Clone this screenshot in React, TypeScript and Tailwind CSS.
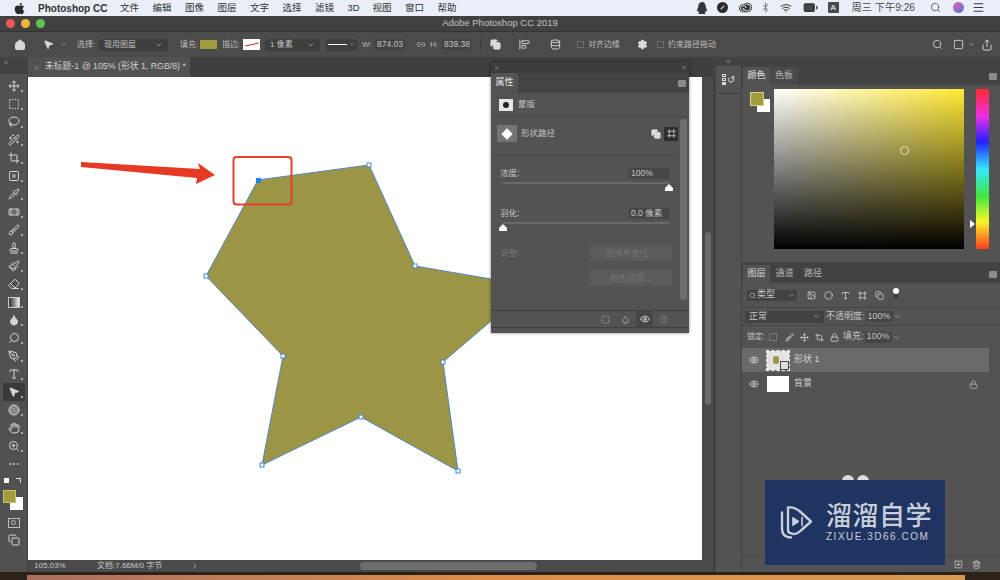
import type { ReactNode } from 'react';
import {
  AlignStartVertical, Bluetooth, Brush, Circle, Crop, Database, Droplet, Ellipsis, Eraser, Eye, Hand, Home, Lasso, Link2, Lock,
  MousePointer2, Move, Paintbrush, PenTool, Pipette, Search, Settings, Share, SquareX, Square, SquareDashed, Stamp,
  Trash2, Type, Wand2, Wifi, ZoomIn, Bandage, ChevronDown, ChevronRight, Menu, X, Image, Frame, SquarePlus, Copy, Battery,
} from 'lucide-react';
import { FaApple, FaQq } from 'react-icons/fa';
import { SiAdobecreativecloud } from 'react-icons/si';

const FONT = '[font-family:"Liberation_Sans","Noto_Sans_CJK_SC",sans-serif]';

const MENUS = ['文件', '编辑', '图像', '图层', '文字', '选择', '滤镜'];
const MENUS_AFTER = ['视图', '窗口', '帮助'];

const TOOLS = [Move, SquareDashed, Lasso, Wand2, Crop, SquareX, Pipette, Bandage, Brush, Stamp, Paintbrush, Eraser];

function PanelMenu() {
  return <div className="h-[7px] w-[8px] rounded-[1px] bg-[#8c8c8c]" />;
}

function Grip({ className }: { className: string }) {
  return <span className={`text-[7px] leading-none text-[#8f8f8f] ${className}`}>«</span>;
}

function SliderThumb({ className }: { className: string }) {
  return (
    <svg viewBox="0 0 8 7" className={`absolute h-[7px] w-[8px] ${className}`}>
      <path d="M4 0 L8 4 L8 7 L0 7 L0 4 Z" fill="#fff" />
    </svg>
  );
}

function Dropdown({ className, label }: { className: string; label: string }) {
  return (
    <div className={`flex h-[12px] items-center justify-between rounded-[2px] bg-[#3e3e3e] px-[5px] text-[8px] text-[#c4c4c4] ${className}`}>
      <span>{label}</span>
      <ChevronDown size={8} className="text-[#b0b0b0]" />
    </div>
  );
}

function Field({ className, label }: { className: string; label: string }) {
  return <div className={`flex h-[11px] items-center rounded-[1px] bg-[#434343] px-[2px] text-[8.5px] text-[#c4c4c4] ${className}`}>{label}</div>;
}

function MenuBar() {
  return (
    <div className="flex h-[16px] items-center bg-[#eaeff7] text-[9.5px] text-[#2e3238]">
      <FaApple size={13} className="ml-[13px] text-[#2a2a2a]" />
      <span className="ml-[12px] w-[82px] text-[10px] font-bold">Photoshop CC</span>
      {MENUS.map((m) => (
        <span key={m} className="w-[32.5px]">{m}</span>
      ))}
      <span className="w-[25px]">3D</span>
      {MENUS_AFTER.map((m) => (
        <span key={m} className="w-[32.5px]">{m}</span>
      ))}
      <div className="ml-auto flex items-center text-[#33373d]">
        <FaQq size={12} className="mr-[9px]" />
        <div className="mr-[11px] flex h-[11px] w-[11px] items-center justify-center rounded-full bg-[#2b2b2b]">
          <div className="h-[5px] w-px rotate-45 bg-white" />
        </div>
        <SiAdobecreativecloud size={13} className="mr-[8px]" />
        <Bluetooth size={11} className="mr-[9px] text-[#777]" />
        <Wifi size={12} className="mr-[11px]" />
        <Battery size={15} fill="#444" className="mr-[10px]" />
        <div className="mr-[13px] flex h-[11px] w-[11px] items-center justify-center rounded-[1px] bg-[#4a4a4a] text-[8px] text-white">A</div>
        <span className="mr-[15px] text-[10.2px] text-[#44484e]">周三 下午9:26</span>
        <Search size={11} className="mr-[12px] text-[#55595f]" />
        <div className="mr-[8px] h-[11px] w-[11px] rounded-full bg-gradient-to-br from-[#e35ea6] to-[#3c70d8]" />
        <Menu size={13} className="mr-[15px]" />
      </div>
    </div>
  );
}

function TitleBar() {
  return (
    <div className="relative flex h-[16px] items-center justify-center border-b border-[#333] bg-[#414141] text-[9.5px] text-[#c2c2c2]">
      <div className="absolute left-[6px] flex gap-[6px]">
        <div className="h-[9px] w-[9px] rounded-full bg-[#ee5a52]" />
        <div className="h-[9px] w-[9px] rounded-full bg-[#f0b43a]" />
        <div className="h-[9px] w-[9px] rounded-full bg-[#5bc550]" />
      </div>
      Adobe Photoshop CC 2019
    </div>
  );
}

function OptionsBar() {
  return (
    <div className="flex h-[25px] items-center bg-[#4b4b4b] text-[8px] text-[#bdbdbd]">
      <Home size={12} fill="#d8d8d8" className="ml-[14px] text-[#d8d8d8]" />
      <MousePointer2 size={11} fill="#d8d8d8" className="ml-[17px] text-[#d8d8d8]" />
      <ChevronDown size={7} className="ml-[6px]" />
      <span className="ml-[10px] w-[22px]">选择:</span>
      <Dropdown className="w-[69px]" label="现用图层" />
      <span className="ml-[12px] w-[20px]">填充:</span>
      <div className="h-[9px] w-[17px] bg-[#a39c3e]" />
      <span className="ml-[5px] w-[21px]">描边:</span>
      <div className="flex h-[11px] w-[17px] items-center justify-center bg-white">
        <div className="h-px w-[14px] -rotate-12 bg-[#c0392b]" />
      </div>
      <Dropdown className="ml-[5px] w-[55px]" label="1 像素" />
      <div className="ml-[6px] flex h-[12px] w-[31px] items-center gap-[2px] rounded-[2px] bg-[#3e3e3e] px-[2px]">
        <div className="h-px w-[20px] bg-white" />
        <ChevronDown size={7} />
      </div>
      <span className="ml-[5px] w-[13px]">W:</span>
      <Field className="w-[30px]" label="874.03" />
      <Link2 size={9} className="ml-[7px] w-[18px]" />
      <span className="w-[12px]">H:</span>
      <Field className="w-[29px]" label="839.38" />
      <div className="ml-[9px] h-[15px] w-px bg-[#3c3c3c]" />
      <Copy size={11} fill="#ddd" className="ml-[9px] text-[#ddd]" />
      <AlignStartVertical size={11} className="ml-[18px] text-[#ddd]" />
      <Database size={11} className="ml-[20px] text-[#ddd]" />
      <div className="ml-[16px] h-[7px] w-[7px] border border-[#6d6d6d] bg-[#474747]" />
      <span className="ml-[4px] w-[36px]">对齐边缘</span>
      <Settings size={11} fill="#ddd" className="ml-[13px] text-[#ddd]" />
      <div className="ml-[9px] h-[7px] w-[7px] border border-[#6d6d6d] bg-[#474747]" />
      <span className="ml-[4px]">约束路径拖动</span>
      <div className="ml-auto flex items-center text-[#cfcfcf]">
        <Search size={11} className="mr-[10px]" />
        <Square size={11} className="mr-[4px]" />
        <ChevronDown size={7} className="mr-[6px]" />
        <Share size={12} className="mr-[7px]" />
      </div>
    </div>
  );
}

function ToolSlot({ children, selected }: { children: ReactNode; selected?: boolean }) {
  return (
    <div className={`relative mx-[3px] flex h-[18px] w-[22px] items-center justify-center ${selected ? 'bg-[#3a3a3a]' : ''}`}>
      {children}
      <div className="absolute bottom-[3px] right-[2px] h-[2px] w-[2px] bg-[#aaa]" />
    </div>
  );
}

function ToolStrip() {
  return (
    <div className="flex w-[28px] flex-col bg-[#424242] text-[#d4d4d4]">
      <div className="h-[17px] pl-[4px] pt-[2px]"><Grip className="block" /></div>
      <div className="flex flex-1 flex-col border-r border-[#444] bg-[#515151] pt-[3px]">
        {TOOLS.map((Icon, i) => (
          <ToolSlot key={i}>
            <Icon size={12} />
          </ToolSlot>
        ))}
        <ToolSlot>
          <div className="h-[11px] w-[12px] border border-[#ccc] bg-gradient-to-r from-[#333] to-[#eee]" />
        </ToolSlot>
        <ToolSlot>
          <Droplet size={12} fill="#d4d4d4" />
        </ToolSlot>
        <ToolSlot>
          <Search size={12} className="-scale-x-100" />
        </ToolSlot>
        <ToolSlot>
          <PenTool size={12} />
        </ToolSlot>
        <ToolSlot>
          <Type size={12} />
        </ToolSlot>
        <ToolSlot selected>
          <MousePointer2 size={12} fill="#d4d4d4" />
        </ToolSlot>
        <ToolSlot>
          <Circle size={12} fill="#8a8a8a" />
        </ToolSlot>
        <ToolSlot>
          <Hand size={12} />
        </ToolSlot>
        <ToolSlot>
          <ZoomIn size={12} />
        </ToolSlot>
        <div className="mx-[3px] flex h-[18px] w-[22px] items-center justify-center">
          <Ellipsis size={12} />
        </div>
        <div className="relative mt-[3px] h-[36px] w-full">
          <div className="absolute left-[4px] top-[2px] h-[5px] w-[5px] bg-white" />
          <div className="absolute left-[16px] top-[2px] h-[5px] w-[5px] border-r border-t border-[#ddd]" />
          <div className="absolute left-[10px] top-[21px] h-[13px] w-[13px] bg-white" />
          <div className="absolute left-[3px] top-[14px] h-[13px] w-[13px] border border-[#c9c56f] bg-[#a39c3e]" />
        </div>
        <div className="mt-[2px] flex h-[17px] w-full items-center justify-center">
          <div className="flex h-[10px] w-[12px] items-center justify-center border border-[#bbb]">
            <div className="h-[5px] w-[5px] rounded-full border border-[#bbb]" />
          </div>
        </div>
        <div className="flex h-[17px] w-full items-center justify-center">
          <Copy size={12} />
        </div>
      </div>
    </div>
  );
}

function Artwork() {
  const points: [number, number][] = [
    [369, 165], [415, 266], [443, 362], [458, 471], [361, 417], [262, 465], [283, 356], [206, 276],
  ];
  return (
    <svg viewBox="28 77 674 483" className="h-full w-full">
      <polygon
        points="258,180 369,165 415,266 532,286 443,362 458,471 361,417 262,465 283,356 206,276"
        fill="#9c9545"
        stroke="#4d87c0"
        strokeWidth="1"
      />
      {points.map(([x, y]) => (
        <rect key={x} x={x - 2} y={y - 2} width="4" height="4" fill="#fff" stroke="#3f86d6" strokeWidth="1" />
      ))}
      <rect x="256" y="178" width="5" height="5" fill="#1f80ee" />
      <rect x="233.5" y="157" width="58" height="47.5" rx="3" fill="none" stroke="#e2402e" strokeWidth="2" />
      <polygon points="81,162 200,169 198,163 215,175 196,184 197,178 81,167" fill="#e73a25" />
    </svg>
  );
}

function DocumentArea() {
  return (
    <div className="flex min-w-0 flex-1 flex-col">
      <div className="flex h-[20px] bg-[#3f3f3f]">
        <div className="flex w-[162px] items-center gap-[5px] bg-[#525252] pl-[5px] text-[8.8px] text-[#d0d0d0]">
          <X size={7} className="text-[#999]" />
          未标题-1 @ 105% (形状 1, RGB/8) *
        </div>
      </div>
      <div className="flex min-h-0 flex-1">
        <div className="w-[674px] bg-white">
          <Artwork />
        </div>
        <div className="flex w-[11px] flex-col bg-[#4a4a4a] pl-[3px] pt-[155px]">
          <div className="h-[173px] w-[6px] rounded-full bg-[#6b6b6b]" />
        </div>
      </div>
      <div className="flex h-[12px] items-center bg-[#4a4a4a] text-[8px] text-[#c8c8c8]">
        <span className="ml-[6px] w-[63px]">105.03%</span>
        <span className="w-[94px]">文档:7.66M/0 字节</span>
        <ChevronRight size={8} />
        <div className="ml-[161px] h-[8px] w-[177px] rounded-full bg-[#6e6e6e]" />
      </div>
    </div>
  );
}

function Dock() {
  return (
    <div className="flex w-[29px] flex-col bg-[#424242] pl-[3px] pr-[1px]">
      <div className="flex h-[9px] items-center justify-center"><Grip className="" /></div>
      <div className="flex flex-1 flex-col bg-[#535353]">
        <div className="flex h-[28px] items-center justify-center gap-[1px] border-b border-[#414141] text-[#d8d8d8]">
          <div className="flex flex-col gap-px">
            <div className="h-[3px] w-[4px] border border-[#d8d8d8]" />
            <div className="h-[3px] w-[4px] border border-[#d8d8d8]" />
            <div className="h-[3px] w-[4px] bg-[#d8d8d8]" />
          </div>
          <span className="text-[10px] leading-none">↺</span>
        </div>
      </div>
    </div>
  );
}

function ColorPanel() {
  return (
    <div className="flex h-[195px] flex-col">
      <div className="flex h-[18px] items-end bg-[#424242] text-[9px] text-[#b5b5b5]">
        <div className="ml-px flex h-[18px] w-[27px] items-center justify-center bg-[#535353] text-[#e6e6e6]">颜色</div>
        <div className="flex h-[18px] w-[28px] items-center justify-center bg-[#4a4a4a]">色板</div>
        <div className="ml-auto mr-[3px] self-center"><PanelMenu /></div>
      </div>
      <div className="flex flex-1 bg-[#535353] pl-px">
        <div className="relative w-[31px]">
          <div className="absolute left-[14px] top-[14px] h-[13px] w-[13px] bg-white" />
          <div className="absolute left-[7px] top-[7px] h-[14px] w-[14px] border border-[#d5d18c] bg-[#a39c3e]" />
        </div>
        <div className="relative mt-[4px] h-[160px] w-[190px] bg-[linear-gradient(to_right,#ffffff,#ffe933)]">
          <div className="absolute inset-0 bg-gradient-to-b from-transparent to-black" />
          <div className="absolute left-[126px] top-[57px] h-[9px] w-[9px] rounded-full border border-[#e6e2ae]" />
        </div>
        <div className="relative ml-[12px] mt-[4px] h-[160px] w-[13px] bg-[linear-gradient(to_bottom,#ff2a2a_0%,#ee2ee6_17%,#2222ff_33%,#35e6ff_50%,#3fe83f_67%,#f7f72a_83%,#ff3b1f_100%)]">
          <div className="absolute -left-[6px] top-[131px] h-0 w-0 border-y-[4px] border-l-[5px] border-y-transparent border-l-white" />
        </div>
      </div>
    </div>
  );
}

function LayerRow({ name, active }: { name: string; active?: boolean }) {
  return (
    <div className={`flex h-[24px] items-center text-[9px] text-[#d5d5d5] ${active ? 'bg-[#6a6a6a]' : 'bg-[#535353]'}`}>
      <Eye size={10} className="ml-[7px] text-[#e6e6e6]" />
      <div className={`relative ml-[8px] w-[22px] ${active ? 'h-[19px] bg-[#e4e4e4] outline-1 outline-dashed outline-[#eee]' : 'h-[16px] bg-white'}`}>
        {active && (
          <>
            <div className="absolute left-[6px] top-[5px] h-[8px] w-[6px] rounded-full bg-[#9c9545]" />
            <div className="absolute bottom-0 right-0 h-[9px] w-[9px] border border-[#444] bg-[#ddd]" />
          </>
        )}
      </div>
      <span className="ml-[5px]">{name}</span>
      {!active && <Lock size={9} className="ml-auto mr-[11px] text-[#b5b5b5]" />}
    </div>
  );
}

function LayersPanel() {
  const filters = [Image, Circle, Type, Frame, Copy];
  const locks = [Brush, Move, Crop, Lock];
  return (
    <div className="flex min-h-0 flex-1 flex-col border-t-[3px] border-[#424242] bg-[#535353] text-[9px] text-[#c4c4c4]">
      <div className="flex h-[18px] items-center bg-[#424242] text-[#b5b5b5]">
        <div className="ml-px flex h-[18px] w-[27px] items-center justify-center bg-[#535353] text-[#d8d8d8]">图层</div>
        <div className="flex h-[18px] w-[29px] items-center justify-center">通道</div>
        <div className="flex h-[18px] w-[28px] items-center justify-center">路径</div>
        <div className="ml-auto mr-[3px]"><PanelMenu /></div>
      </div>
      <div className="flex h-[25px] items-center border-b border-[#464646] pl-[5px]">
        <div className="flex h-[11px] w-[50px] items-center gap-[1px] rounded-[2px] bg-[#424242] px-[2px]">
          <Search size={7} />
          类型
          <ChevronDown size={7} className="ml-auto" />
        </div>
        <div className="ml-[10px] flex gap-[8px] text-[#d5d5d5]">
          {filters.map((Icon, i) => (
            <Icon key={i} size={9} />
          ))}
        </div>
        <div className="ml-[9px] flex flex-col items-center self-start pt-[5px]">
          <div className="h-[6px] w-[6px] rounded-full bg-white" />
          <div className="h-[5px] w-[4px] rounded-b-full bg-[#3c3c3c]" />
        </div>
      </div>
      <div className="flex h-[18px] items-center border-b border-[#464646] pl-[3px]">
        <div className="flex h-[12px] w-[79px] items-center rounded-[1px] bg-[#424242] px-[4px]">
          正常
          <ChevronDown size={7} className="ml-auto" />
        </div>
        <span className="ml-[2px]">不透明度:</span>
        <div className="ml-[1px] flex h-[11px] w-[27px] items-center bg-[#454545] px-[2px] text-[9px]">100%</div>
        <ChevronDown size={7} className="ml-[1px]" />
      </div>
      <div className="flex h-[22px] items-center pl-[5px]">
        <span className="w-[19px] whitespace-nowrap text-[8px]">锁定:</span>
        <div className="ml-[3px] h-[8px] w-[8px] border border-[#777]" />
        {locks.map((Icon, i) => (
          <Icon key={i} size={9} className={i === 0 ? 'ml-[8px] text-[#d5d5d5]' : 'ml-[6px] text-[#d5d5d5]'} />
        ))}
        <span className="ml-[4px]">填充:</span>
        <div className="ml-[1px] flex h-[11px] w-[27px] items-center bg-[#454545] px-[2px] text-[9px]">100%</div>
        <ChevronDown size={7} className="ml-[1px]" />
      </div>
      <div className="flex min-h-0 flex-1 flex-col pr-[11px]">
        <LayerRow name="形状 1" active />
        <LayerRow name="背景" />
      </div>
      <div className="flex h-[17px] items-center justify-end gap-[9px] border-t border-[#464646] pr-[19px] text-[#cfcfcf]">
        <SquarePlus size={9} />
        <Trash2 size={9} />
      </div>
    </div>
  );
}

function PropertiesPanel() {
  return (
    <div className="absolute left-[491px] top-[62px] flex h-[271px] w-[198px] flex-col bg-[#535353] text-[8.5px] text-[#c4c4c4] shadow-[0_0_3px_rgba(0,0,0,0.5)]">
      <div className="flex h-[11px] items-center justify-between bg-[#3d3d3d] px-[3px] text-[#999]">
        <X size={6} />
        <Grip className="" />
      </div>
      <div className="flex h-[20px] items-center bg-[#444]">
        <div className="flex h-[20px] w-[27px] items-center justify-center bg-[#535353] text-[9px] text-[#e2e2e2]">属性</div>
        <div className="ml-auto mr-[3px]"><PanelMenu /></div>
      </div>
      <div className="flex h-[24px] items-center border-b border-[#474747] pl-[8px]">
        <div className="flex h-[12px] w-[14px] items-center justify-center bg-[#e4e4e4]">
          <div className="h-[6px] w-[6px] rounded-full bg-[#222]" />
        </div>
        <span className="ml-[5px]">蒙版</span>
      </div>
      <div className="flex min-h-0 flex-1">
        <div className="flex min-w-0 flex-1 flex-col">
          <div className="flex h-[38px] items-center border-b border-[#474747] pb-[4px] pl-[6px]">
            <div className="flex h-[17px] w-[20px] items-center justify-center bg-[#747474]">
              <div className="h-[8px] w-[8px] rotate-45 bg-white" />
            </div>
            <span className="ml-[4px]">形状路径</span>
            <Copy size={10} fill="#ddd" className="ml-auto text-[#ddd]" />
            <div className="ml-[3px] flex h-[14px] w-[14px] items-center justify-center bg-[#2f2f2f]">
              <Frame size={9} className="text-[#ddd]" />
            </div>
          </div>
          <div className="flex flex-col pl-[9px] pr-[9px] pt-[13px]">
            <div className="flex h-[11px] items-center justify-between">
              <span>浓度:</span>
              <div className="flex h-[11px] w-[40px] items-center bg-[#474747] px-[2px] text-[8.5px]">100%</div>
            </div>
            <div className="relative ml-[3px] mt-[3px] h-[2px] bg-[#6a6a6a]">
              <SliderThumb className="-right-[4px] top-[2px]" />
            </div>
            <div className="mt-[24px] flex h-[11px] items-center justify-between">
              <span>羽化:</span>
              <div className="flex h-[11px] w-[40px] items-center bg-[#474747] px-[2px] text-[8.5px]">0.0 像素</div>
            </div>
            <div className="relative ml-[3px] mt-[3px] h-[2px] bg-[#6a6a6a]">
              <SliderThumb className="-left-[4px] top-[2px]" />
            </div>
            <div className="mt-[21px] flex items-center justify-between text-[#767676]">
              <span>调整:</span>
              <div className="-mr-[3px] flex h-[16px] w-[83px] items-center justify-center bg-[#5b5b5b]">选择并遮住...</div>
            </div>
            <div className="-mr-[3px] mt-[9px] flex h-[16px] w-[83px] items-center justify-center self-end bg-[#5b5b5b] text-[#767676]">颜色范围...</div>
          </div>
        </div>
        <div className="flex w-[11px] flex-col pl-[2px] pt-[2px]">
          <div className="h-[181px] w-[7px] rounded-full bg-[#6e6e6e]" />
        </div>
      </div>
      <div className="flex h-[18px] items-center justify-end border-y border-[#3f3f3f] pr-[21px] text-[#b5b5b5]">
        <SquareDashed size={9} />
        <Droplet size={9} className="ml-[11px]" />
        <div className="ml-[6px] flex h-[16px] w-[17px] items-center justify-center bg-[#474747]">
          <Eye size={10} className="text-[#e6e6e6]" />
        </div>
        <Trash2 size={9} className="ml-[6px] text-[#777]" />
      </div>
      <div className="h-[5px]" />
    </div>
  );
}

function Watermark() {
  return (
    <>
      <div className="absolute left-[842px] top-[475px] h-[12px] w-[12px] rounded-full bg-[#dedede]" />
      <div className="absolute left-[857px] top-[475px] h-[12px] w-[12px] rounded-full bg-[#dedede]" />
      <div className="absolute left-[765px] top-[480px] flex h-[85px] w-[180px] items-center bg-[#1f3460] text-[#c9ced8]">
        <svg viewBox="2 2 33 34" className="ml-[15px] h-[35px] w-[33px]" fill="none" stroke="#c9ced8" strokeWidth="2.4" strokeLinejoin="round" strokeLinecap="round">
          <path d="M10 4 L10 26 Q10 30 14 30 Q18 32 24 26 L33 18 L22 8 Q16 3 10 4 Z" />
          <path d="M4 9 L4 25 Q4 34 13 34" />
          <path d="M15 14 L21 18 L15 22 Z" fill="#c9ced8" strokeWidth="1" />
          <path d="M24 14 L24 22" strokeWidth="1.6" />
        </svg>
        <div className="ml-[13px] flex flex-col">
          <span className="text-[26px] font-medium leading-[29px] tracking-[0.5px]">溜溜自学</span>
          <span className="text-[10px] leading-[12px] tracking-[1.5px]">ZIXUE.3D66.COM</span>
        </div>
      </div>
    </>
  );
}

export default function App() {
  return (
    <div className={`relative flex h-[580px] w-[1000px] flex-col overflow-hidden bg-[#424242] ${FONT}`}>
      <MenuBar />
      <TitleBar />
      <OptionsBar />
      <div className="flex min-h-0 flex-1">
        <ToolStrip />
        <DocumentArea />
        <Dock />
        <div className="flex w-[258px] flex-col">
          <div className="h-[10px] pr-[5px] text-right"><Grip className="" /></div>
          <ColorPanel />
          <LayersPanel />
        </div>
      </div>
      <div className="h-[8px] bg-[#2c2218] pb-0 pl-[27px] pr-[35px] pt-[3px]">
        <div className="h-full bg-gradient-to-r from-[#a9705f] via-[#dd8e48] to-[#d79a55]" />
      </div>
      <PropertiesPanel />
      <Watermark />
    </div>
  );
}
